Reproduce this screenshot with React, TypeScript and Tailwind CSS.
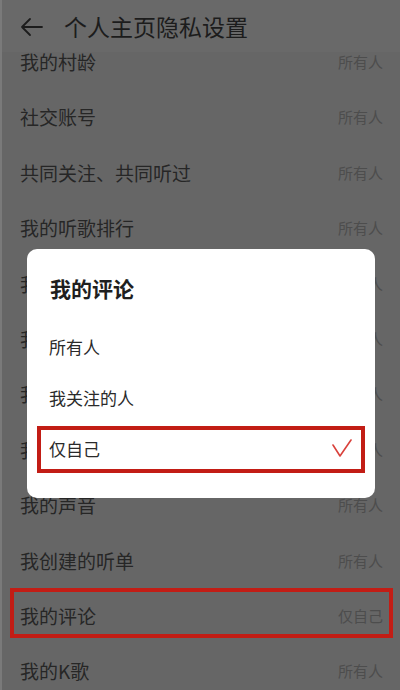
import React from "react";

const rows: { label: string; value: string }[] = [
  { label: "我的村龄", value: "所有人" },
  { label: "社交账号", value: "所有人" },
  { label: "共同关注、共同听过", value: "所有人" },
  { label: "我的听歌排行", value: "所有人" },
  { label: "我的收藏", value: "所有人" },
  { label: "我的关注", value: "所有人" },
  { label: "我的粉丝", value: "所有人" },
  { label: "我的动态", value: "所有人" },
  { label: "我的声音", value: "所有人" },
  { label: "我创建的听单", value: "所有人" },
  { label: "我的评论", value: "仅自己" },
  { label: "我的K歌", value: "所有人" },
];

const options = ["所有人", "我关注的人", "仅自己"];

export default function App() {
  return (
    <div
      className="relative w-[400px] h-[690px] overflow-hidden bg-[#666666] border-l-[2px] border-[#7a7a7a]"
      style={{ fontFamily: '"Noto Sans CJK SC", "Noto Sans", sans-serif' }}
    >
      <div className="relative z-10 h-[52px] bg-[#696969] flex items-center pl-[18px]">
        <svg width="24" height="20" viewBox="0 0 24 20" className="mt-[1px]">
          <path
            d="M22 10H2M10 2L2 10L10 18"
            fill="none"
            stroke="#1c1c1c"
            strokeWidth="1.8"
            strokeLinecap="round"
            strokeLinejoin="round"
          />
        </svg>
        <span className="ml-[20px] text-[23px] leading-[30px] text-[#1c1c1c]">个人主页隐私设置</span>
      </div>

      <div className="mt-[-17.7px] flex flex-col">
        {rows.map((r, i) => (
          <div
            key={i}
            className="relative h-[55.4px] shrink-0 flex items-center justify-between pl-[18px] pr-[17px]"
          >
            <span className="text-[19px] leading-[26px] text-[#262626]">{r.label}</span>
            <span className="text-[15px] leading-[20px] text-[#4d4d4d]">{r.value}</span>
            {i === 10 && (
              <div className="absolute top-[0px] left-[8px] right-[7px] h-[50px] border-[4px] border-[#c21d15]" />
            )}
          </div>
        ))}
      </div>

      <div className="absolute left-[25px] top-[249px] w-[348px] h-[249px] bg-white rounded-[10px] pt-[24px] flex flex-col">
        <div className="pl-[23px] h-[32px] flex items-center text-[21px] font-bold text-[#1f1f1f]">我的评论</div>
        <div className="mt-[16.5px] flex flex-col">
          {options.map((o, i) => (
            <div key={i} className="h-[51px] flex items-center px-[10px]">
              <div
                className={
                  "w-full h-[47px] flex items-center justify-between pl-[8px] pr-[8px] border-[4px] " +
                  (i === 2 ? "border-[#c21d15]" : "border-transparent")
                }
              >
                <span className="text-[17px] leading-[24px] text-[#2a2a2a]">{o}</span>
                {i === 2 && (
                  <svg width="22" height="20" viewBox="0 0 22 20">
                    <path
                      d="M2 6L9 17L20 1"
                      fill="none"
                      stroke="#d9413b"
                      strokeWidth="1.6"
                      strokeLinecap="round"
                      strokeLinejoin="round"
                    />
                  </svg>
                )}
              </div>
            </div>
          ))}
        </div>
      </div>
    </div>
  );
}
